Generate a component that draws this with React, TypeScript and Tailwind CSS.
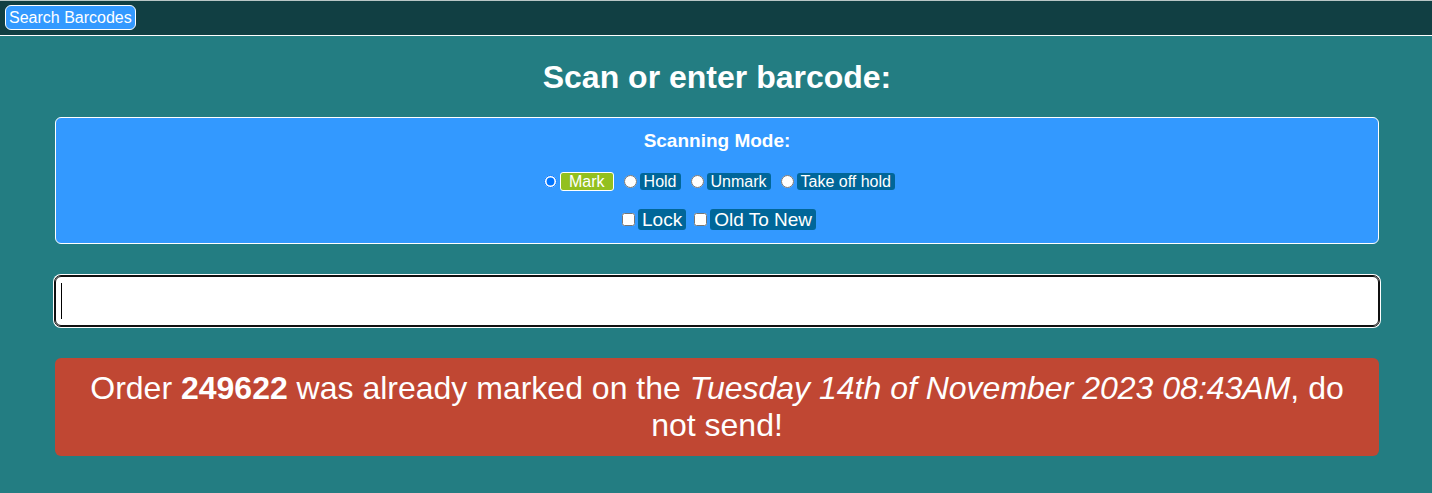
import { useState } from "react";

const modes = ["Mark", "Hold", "Unmark", "Take off hold"];
const options = ["Lock", "Old To New"];

export default function App() {
  const [mode, setMode] = useState("Mark");
  const [code, setCode] = useState("");

  return (
    <div className="min-h-screen bg-[#237d82] font-['Liberation_Sans',Arial,sans-serif] text-white">
      <nav className="flex h-9 items-start border-t border-b border-t-[#b9c6c6] border-b-white bg-[#113f43] px-[5px] pt-1">
        <button
          type="button"
          className="h-[25px] rounded-md border border-white bg-[#3399ff] px-[3px] text-[16px] leading-[23px] whitespace-nowrap"
        >
          Search Barcodes
        </button>
      </nav>

      <main className="pt-[23px] pr-[53px] pb-9 pl-[55px] text-center">
        <h1 className="text-[32px] leading-[37px] font-bold">
          <label htmlFor="barcode">Scan or enter barcode:</label>
        </h1>

        <section className="mt-[21px] rounded-md border border-white bg-[#3399ff] pt-3 pb-[13px]">
          <h2 className="text-[19px] leading-[21px] font-bold">Scanning Mode:</h2>
          <div className="mt-5 flex h-5 items-center justify-center gap-[10px] pl-[5px]">
            {modes.map((name) => (
              <label key={name} className="flex items-center gap-[3px] text-[16px] leading-[17px]">
                <input
                  type="radio"
                  name="mode"
                  checked={mode === name}
                  onChange={() => setMode(name)}
                  className="size-[13px]"
                />
                <span
                  className={
                    mode === name
                      ? "rounded-[3px] border border-white bg-[#93c01f] px-2"
                      : "rounded-[3px] bg-[#006699] px-1"
                  }
                >
                  {name}
                </span>
              </label>
            ))}
          </div>
          <div className="mt-[18px] flex items-center justify-center gap-2 pl-1">
            {options.map((name) => (
              <label key={name} className="flex items-center gap-[3px] text-[19px] leading-[21px]">
                <input type="checkbox" className="size-[13px]" />
                <span className="rounded-[3px] bg-[#006699] px-1">{name}</span>
              </label>
            ))}
          </div>
        </section>

        <div className="relative mt-8">
          <input
            id="barcode"
            type="text"
            autoFocus
            autoComplete="off"
            value={code}
            onChange={(event) => setCode(event.target.value)}
            className="block h-[50px] w-full rounded-md border border-[#101010] bg-white px-[5px] text-[32px] text-black ring-2 ring-white outline-1 outline-[#101010]"
          />
          {code === "" && (
            <span className="pointer-events-none absolute top-[7px] left-[6px] h-9 w-px bg-black" />
          )}
        </div>

        <p
          role="alert"
          className="mt-8 rounded-md bg-[#c04733] px-5 py-3 text-[32px] leading-[37px]"
        >
          Order <b>249622</b> was already marked on the{" "}
          <i>Tuesday 14th of November 2023 08:43AM</i>, do not send!
        </p>
      </main>
    </div>
  );
}
